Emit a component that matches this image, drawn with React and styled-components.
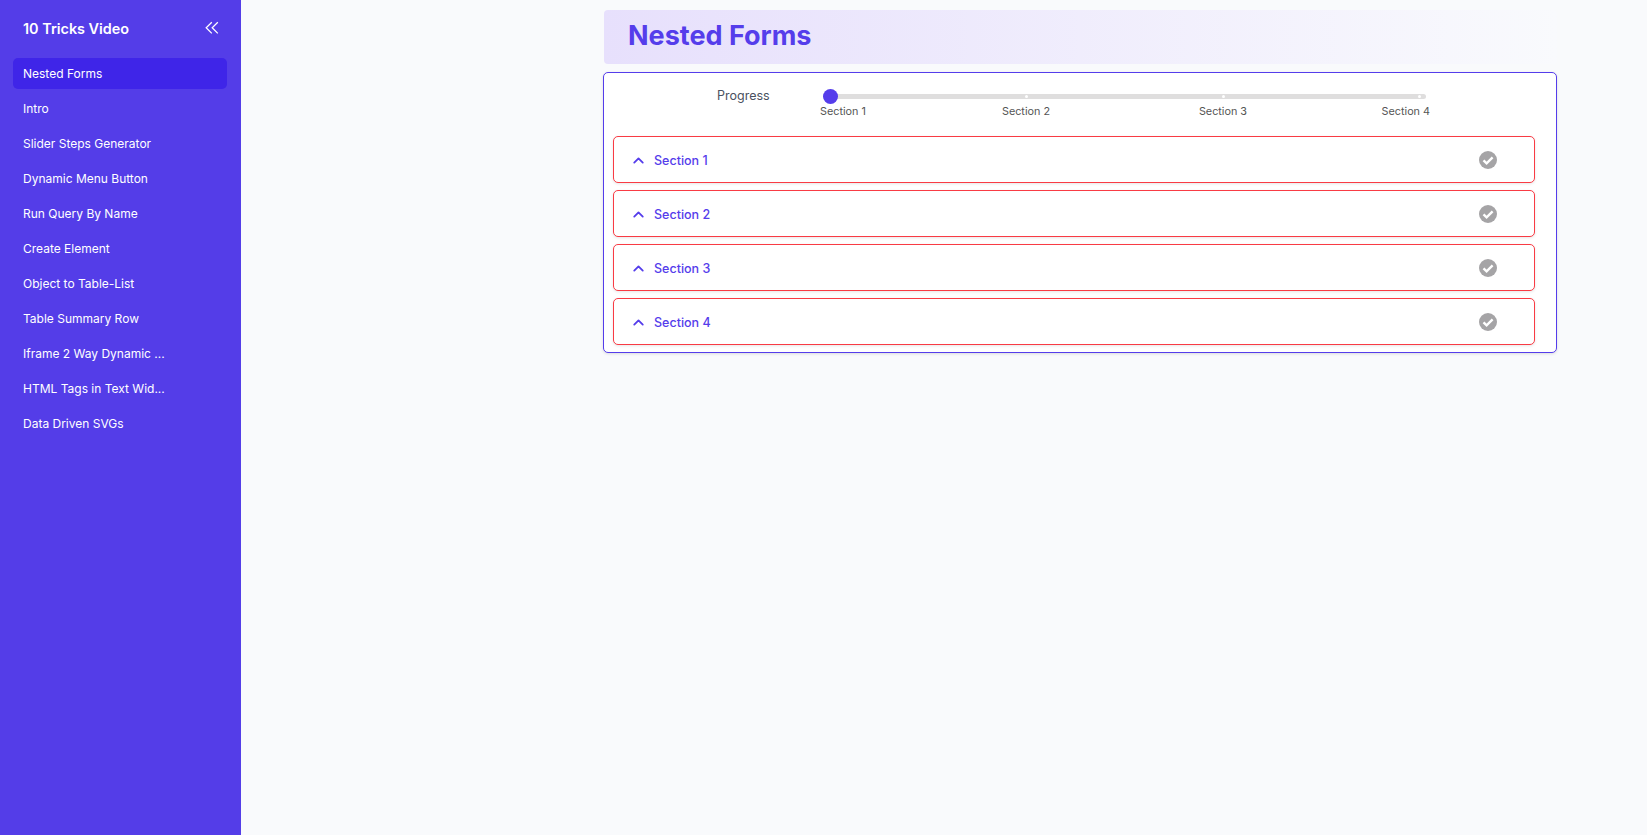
import React from "react";
import styled, { createGlobalStyle } from "styled-components";
import { ChevronUp } from "lucide-react";

const GlobalStyle = createGlobalStyle`
  html, body {
    margin: 0;
    height: 100%;
    background: #f9fafc;
    font-family: Inter, "Liberation Sans", sans-serif;
  }
`;

const Page = styled.div`
  display: flex;
  height: 835px;
  overflow: hidden;
`;

const Sidebar = styled.aside`
  width: 241px;
  flex-shrink: 0;
  box-sizing: border-box;
  background: #543de8;
  padding: 0 14px 0 13px;
`;

const SidebarHead = styled.div`
  box-sizing: border-box;
  height: 58px;
  display: flex;
  align-items: center;
  justify-content: space-between;
  padding: 0 8px 2px 10px;
  color: #fff;
  font-size: 14.4px;
  font-weight: 600;
`;

const CollapseButton = styled.span`
  display: flex;
  color: #fff;
`;

const Nav = styled.nav`
  display: flex;
  flex-direction: column;
  gap: 4px;
`;

const NavItem = styled.div`
  height: 31px;
  display: flex;
  align-items: center;
  padding: 0 10px;
  border-radius: 5px;
  font-size: 12px;
  color: #fff;
  background: ${(p) => (p.$active ? "#3f25e8" : "transparent")};
`;

const Main = styled.main`
  flex: 1;
  padding: 10px 90px 0 362px;
`;

const Banner = styled.div`
  box-sizing: border-box;
  height: 54px;
  display: flex;
  align-items: center;
  margin-left: 1px;
  padding: 0 0 4px 24px;
  border-radius: 4px;
  background: linear-gradient(90deg, #e7e0fc 0%, #f9fafd 100%);
`;

const Title = styled.h1`
  margin: 0;
  font-size: 27px;
  font-weight: 700;
  color: #553deb;
`;

const Card = styled.section`
  box-sizing: border-box;
  height: 281px;
  margin-top: 8px;
  padding: 15px 21px 0 9px;
  background: #fff;
  border: 1px solid #553deb;
  border-radius: 5px;
  box-shadow: 0 1px 3px rgba(0, 0, 0, 0.12);
`;

const ProgressRow = styled.div`
  display: flex;
  align-items: flex-start;
  height: 48px;
  padding-left: 104px;
`;

const ProgressLabel = styled.div`
  width: 103px;
  margin-top: -1px;
  font-size: 12.5px;
  line-height: 17px;
  color: #4a5160;
`;

const Slider = styled.div`
  width: 610px;
`;

const Track = styled.div`
  position: relative;
  width: 603px;
  height: 5px;
  margin: 6px 0 0 3px;
  border-radius: 3px;
  background: #dfdede;
`;

const Knob = styled.span`
  position: absolute;
  left: -0.5px;
  top: -5px;
  width: 15px;
  height: 15px;
  border-radius: 50%;
  background: #553deb;
`;

const Dot = styled.span`
  position: absolute;
  top: 1px;
  width: 3px;
  height: 3px;
  border-radius: 50%;
  background: #fff;
`;

const Marks = styled.div`
  display: grid;
  grid-template-columns: 110px 192px 202px 106px;
  margin-top: 6px;
`;

const Mark = styled.span`
  font-size: 10.8px;
  line-height: 14px;
  color: #555;
  text-align: ${(p) => p.$align};
`;

const Sections = styled.div`
  display: flex;
  flex-direction: column;
  gap: 7px;
`;

const SectionRow = styled.div`
  box-sizing: border-box;
  height: 47px;
  display: flex;
  align-items: center;
  padding: 2px 37px 0 16px;
  background: #fff;
  border: 1px solid #f93b44;
  border-radius: 5px;
  box-shadow: 0 1px 3px rgba(0, 0, 0, 0.1);
  color: #553deb;
  font-size: 12.5px;
  font-weight: 500;
`;

const SectionName = styled.span`
  flex: 1;
  margin-left: 7px;
`;

const CheckBadge = styled.svg`
  margin-top: -1px;
`;

const CollapseIcon = () => (
  <svg width="14" height="14" viewBox="0 0 14 14" fill="none" stroke="currentColor" strokeWidth="1.3">
    <path d="M6.8 1.2 1.2 6.8 6.8 12.4" />
    <path d="M12.8 1.2 7.2 6.8 12.8 12.4" />
  </svg>
);

const CheckIcon = () => (
  <CheckBadge width="18" height="18" viewBox="0 0 18 18">
    <circle cx="9" cy="9" r="9" fill="#a5a4a6" />
    <path d="M4.5 9.3 7.6 12.3 13.6 6.4" fill="none" stroke="#fff" strokeWidth="2.4" />
  </CheckBadge>
);

const menu = [
  "Nested Forms",
  "Intro",
  "Slider Steps Generator",
  "Dynamic Menu Button",
  "Run Query By Name",
  "Create Element",
  "Object to Table-List",
  "Table Summary Row",
  "Iframe 2 Way Dynamic ...",
  "HTML Tags in Text Wid...",
  "Data Driven SVGs",
];

const marks = [
  { label: "Section 1", align: "left" },
  { label: "Section 2", align: "center" },
  { label: "Section 3", align: "center" },
  { label: "Section 4", align: "right" },
];

const dots = [201.5, 398.5, 594.5];

export default function App() {
  return (
    <Page>
      <GlobalStyle />
      <Sidebar>
        <SidebarHead>
          10 Tricks Video
          <CollapseButton>
            <CollapseIcon />
          </CollapseButton>
        </SidebarHead>
        <Nav>
          {menu.map((item, index) => (
            <NavItem key={item} $active={index === 0}>
              {item}
            </NavItem>
          ))}
        </Nav>
      </Sidebar>
      <Main>
        <Banner>
          <Title>Nested Forms</Title>
        </Banner>
        <Card>
          <ProgressRow>
            <ProgressLabel>Progress</ProgressLabel>
            <Slider>
              <Track>
                {dots.map((left) => (
                  <Dot key={left} style={{ left }} />
                ))}
                <Knob />
              </Track>
              <Marks>
                {marks.map((m) => (
                  <Mark key={m.label} $align={m.align}>
                    {m.label}
                  </Mark>
                ))}
              </Marks>
            </Slider>
          </ProgressRow>
          <Sections>
            {marks.map((m) => (
              <SectionRow key={m.label}>
                <ChevronUp size={17} strokeWidth={2.6} />
                <SectionName>{m.label}</SectionName>
                <CheckIcon />
              </SectionRow>
            ))}
          </Sections>
        </Card>
      </Main>
    </Page>
  );
}
